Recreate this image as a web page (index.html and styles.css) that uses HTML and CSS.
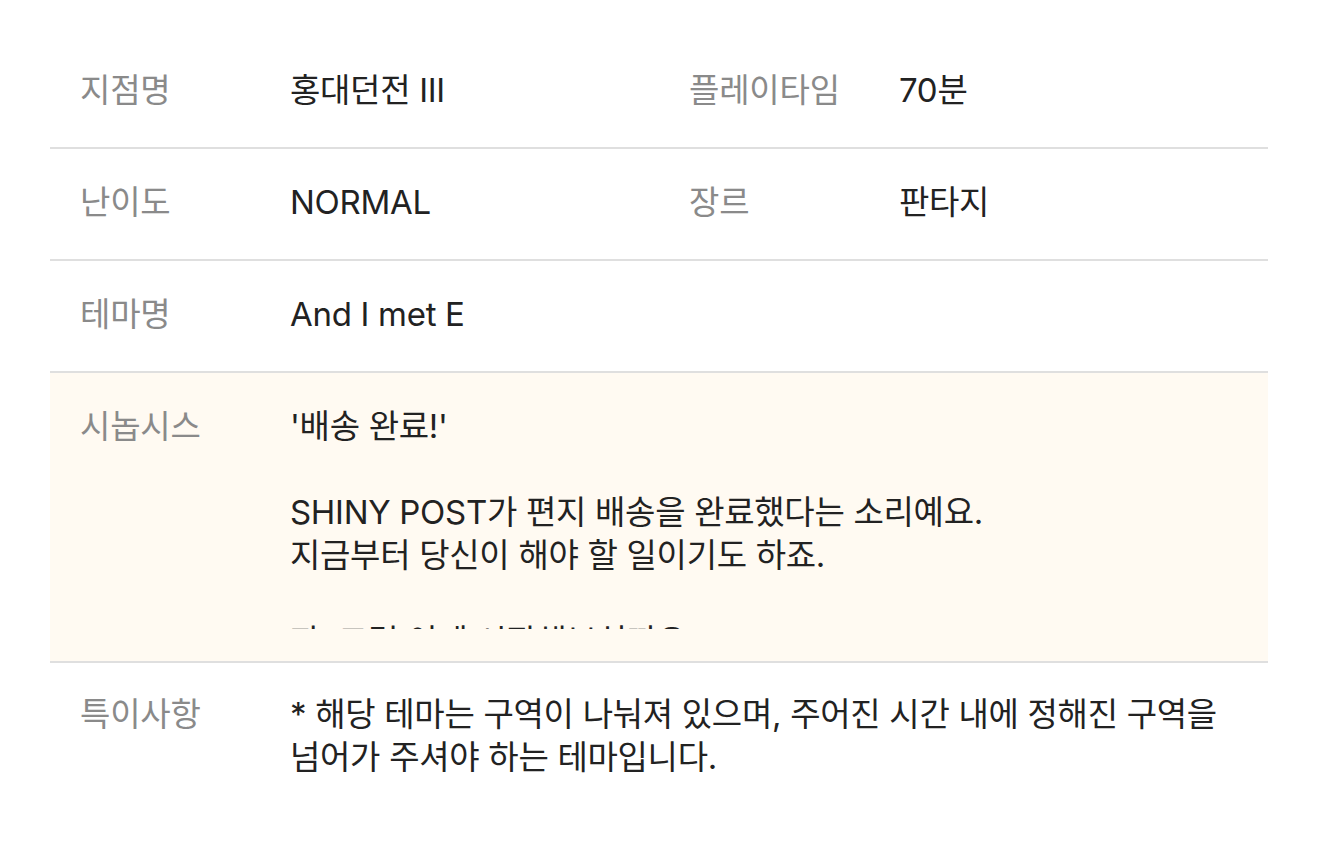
FILE: index.html
```html
<!DOCTYPE html>
<html lang="ko">
<head>
<meta charset="utf-8">
<link rel="stylesheet" href="styles.css">
</head>
<body>
<div class="info">
  <div class="row">
    <div class="label">지점명</div>
    <div class="value">홍대던전 III</div>
    <div class="label">플레이타임</div>
    <div class="value">70분</div>
  </div>
  <div class="row">
    <div class="label">난이도</div>
    <div class="value">NORMAL</div>
    <div class="label">장르</div>
    <div class="value">판타지</div>
  </div>
  <div class="row">
    <div class="label">테마명</div>
    <div class="value wide">And I met E</div>
  </div>
  <div class="row synopsis">
    <div class="label">시놉시스</div>
    <div class="value wide clip">'배송 완료!'<br><br>SHINY POST가 편지 배송을 완료했다는 소리예요.<br>지금부터 당신이 해야 할 일이기도 하죠.<br><br>자, 그럼 이제 시작해보실까요?</div>
  </div>
  <div class="row last">
    <div class="label">특이사항</div>
    <div class="value wide">* 해당 테마는 구역이 나눠져 있으며, 주어진 시간 내에 정해진 구역을 넘어가 주셔야 하는 테마입니다.</div>
  </div>
</div>
</body>
</html>
```

FILE: styles.css
```css
html, body {
  margin: 0;
  padding: 0;
  background: #ffffff;
}
body {
  font-family: Inter, "Noto Sans CJK KR", "Noto Sans", sans-serif;
  font-size: 33px;
  line-height: 43px;
  color: #222222;
  word-break: keep-all;
}
.info {
  margin: 37px 52px 0 50px;
}
.row {
  display: grid;
  grid-template-columns: 240px 369px 240px 369px;
  border-bottom: 2px solid #dfdfdf;
  padding: 32px 0 35px;
}
.row.last {
  border-bottom: none;
  padding-top: 30px;
}
.label {
  padding-left: 30px;
  color: #8a8a8a;
  letter-spacing: -0.2px;
}
.value {
  color: #222222;
  letter-spacing: -0.3px;
}
.wide {
  grid-column: 2 / 5;
}
.synopsis {
  background: #fffaf2;
  padding-bottom: 32px;
}
.clip {
  max-height: 224px;
  overflow: hidden;
}
```
